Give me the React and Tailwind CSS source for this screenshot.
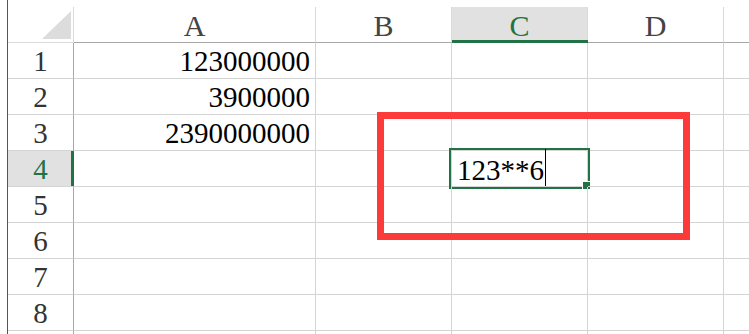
import React from "react";

const columns = [
  { key: "A", width: "w-[242px]" },
  { key: "B", width: "w-[136px]" },
  { key: "C", width: "w-[136px]" },
  { key: "D", width: "w-[136px]" },
];

const values = {
  1: { A: "123000000" },
  2: { A: "3900000" },
  3: { A: "2390000000" },
};

const rows = [1, 2, 3, 4, 5, 6, 7, 8, 9];

export default function App() {
  return (
    <div className="relative flex h-[334px] w-[749px] overflow-hidden bg-white font-['Liberation_Serif',serif] text-[29px] leading-none">
      {/* window edge */}
      <div className="w-[7px] shrink-0" />
      <div className="w-px shrink-0 bg-[#217346]" />

      <div className="flex flex-1 flex-col">
        <div className="h-[7px] shrink-0" />

        {/* Column headers */}
        <div className="flex h-[36px] shrink-0">
          <div className="relative w-[66px] shrink-0 border-r border-b border-r-[#dadada] border-b-[#dadada]">
            <svg className="absolute left-[34px] top-[4px]" width="29" height="28" viewBox="0 0 29 28">
              <polygon points="29,0 29,28 0,28" fill="#dcdcdc" />
            </svg>
          </div>
          {columns.map((col) => (
            <div
              key={col.key}
              className={`relative flex shrink-0 items-end justify-center border-r border-b border-r-[#dadada] border-b-[#a8a8a8] pb-[1px] text-[30px] ${col.width} ${
                col.key === "C" ? "bg-[#e1e1e1] text-[#217346]" : "text-[#444444]"
              }`}
            >
              {col.key}
              {col.key === "C" && (
                <div className="absolute -bottom-px left-0 right-[-1px] h-[3px] bg-[#217346]" />
              )}
            </div>
          ))}
          <div className="flex-1 border-b border-b-[#a8a8a8]" />
        </div>

        {/* Rows */}
        {rows.map((r) => (
          <div key={r} className="flex h-[36px] shrink-0">
            <div
              className={`relative flex w-[66px] shrink-0 items-end justify-center border-r border-b border-r-[#a8a8a8] border-b-[#d4d4d4] pb-[2px] ${
                r === 4 ? "bg-[#e1e1e1] text-[#217346]" : "text-[#333333]"
              }`}
            >
              {r < 9 ? r : ""}
              {r === 4 && (
                <div className="absolute -right-px top-0 bottom-0 w-[3px] bg-[#217346]" />
              )}
            </div>
            {columns.map((col) => (
              <div
                key={col.key}
                className={`relative flex shrink-0 items-end justify-end border-r border-b border-[#d4d4d4] pr-[5px] pb-[2px] text-black ${col.width}`}
              >
                {values[r]?.[col.key]}
                {r === 4 && col.key === "C" && (
                  <>
                    <div className="absolute -left-[3px] -top-[3px] flex h-[41px] w-[141px] items-end border-2 border-[#217346] pb-[2px] pl-[6px]">
                      <span>123**6</span>
                      <span className="ml-px h-[37px] w-px self-center bg-black" />
                    </div>
                    <div className="absolute -bottom-[3px] -right-[3px] h-[8px] w-[8px] border-l border-t border-white bg-[#217346]" />
                  </>
                )}
              </div>
            ))}
            <div className="flex-1 border-b border-[#d4d4d4]" />
          </div>
        ))}
      </div>

      {/* red annotation box */}
      <div className="absolute left-[377px] top-[112px] h-[128px] w-[313px] border-[7px] border-[#fc3a3a]" />
    </div>
  );
}
